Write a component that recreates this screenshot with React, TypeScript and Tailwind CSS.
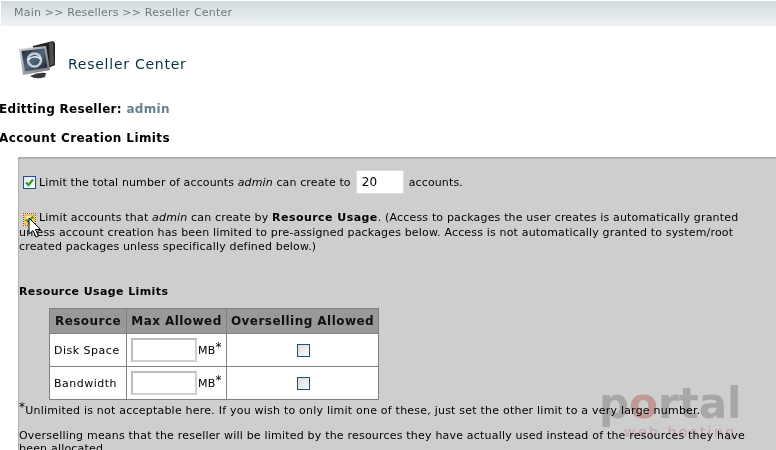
const font = { fontFamily: '"DejaVu Sans", Verdana, sans-serif' }

function Check({ focus }: { focus?: boolean }) {
  return (
    <span className={focus
      ? 'inline-flex w-[13px] h-[13px] shrink-0 items-center justify-center border border-dotted border-[#6b5a3a] bg-[#fde6b4] shadow-[inset_0_0_0_2px_#f6bb52]'
      : 'inline-flex w-[13px] h-[13px] shrink-0 items-center justify-center border border-[#1c5180] bg-gradient-to-br from-[#e6e6e0] to-white'}>
      <svg viewBox="0 0 9 9" className="w-[9px] h-[9px]">
        <path d="M1 4.5 L3.5 7 L8 1.5" fill="none" stroke="#1fa52a" strokeWidth="2.2" />
      </svg>
    </span>
  )
}

function EmptyCheck() {
  return <span className="ml-px inline-block w-[13px] h-[13px] border border-[#1c5180] bg-gradient-to-br from-[#dcdcd6] to-[#fbfbf8]" />
}

function LimitRow({ name }: { name: string }) {
  return (
    <tr className="h-[33px]">
      <td className="border border-[#808080] pl-[4px] pr-[4px] tracking-[0.5px]">{name}</td>
      <td className="border border-[#808080] pl-[4px]">
        <div className="flex items-center">
          <span className="w-[66px] h-[24px] bg-white border-2 border-[#cfcfcf] border-t-[#bdbdbd] border-l-[#bdbdbd]" />
          <span className="ml-px">MB<sup className="text-[12px] relative -top-[3px] align-baseline">*</sup></span>
        </div>
      </td>
      <td className="border border-[#808080] text-center"><div className="flex justify-center"><EmptyCheck /></div></td>
    </tr>
  )
}

export default function App() {
  return (
    <div style={font} className="relative w-[776px] h-[450px] overflow-hidden bg-white text-[11px] text-black">
      <div className="ml-px mt-px h-[25px] flex items-center pl-[13px] text-[11px] tracking-[0.2px] text-[#6f7a7d] bg-gradient-to-b from-[#cfdcdf] to-[#eff3f3]">
        Main &gt;&gt; Resellers &gt;&gt; Reseller Center
      </div>

      <div className="flex items-center ml-[18px] mt-[14px] h-[40px]">
        <svg viewBox="0 0 38 40" className="w-[38px] h-[40px]">
          <defs>
            <linearGradient id="screen" x1="0" y1="0" x2="1" y2="1">
              <stop offset="0" stopColor="#1d2530" />
              <stop offset="0.5" stopColor="#51677f" />
              <stop offset="1" stopColor="#141a22" />
            </linearGradient>
            <linearGradient id="frame" x1="0" y1="0" x2="1" y2="1">
              <stop offset="0" stopColor="#d6dadc" />
              <stop offset="1" stopColor="#6e7276" />
            </linearGradient>
          </defs>
          <path d="M15 6 L35 1 L37 3 L37 25 L26 30 L15 12 Z" fill="#202226" />
          <path d="M31 3 L35 2 L36 24 L32 26 Z" fill="#4c4f53" />
          <path d="M1 9 L28 6 L32 30 L5 35 Z" fill="url(#frame)" />
          <path d="M3.5 11 L26.5 8.5 L29.5 27.5 L7 31.5 Z" fill="url(#screen)" />
          <circle cx="16.5" cy="20" r="6.5" fill="none" stroke="#c3ced6" strokeWidth="2.5" />
          <path d="M10 20 Q16 14 23 19" fill="none" stroke="#f0f4f7" strokeWidth="1.5" />
          <path d="M12 36 Q20 32 28 33 L27 37 Q18 40 12 36 Z" fill="#34373b" />
        </svg>
        <span className="ml-[12px] mt-[8px] text-[14px] text-[#06333e] tracking-[0.75px]">Reseller Center</span>
      </div>

      <div className="-ml-[1px] mt-[22px] text-[12px] font-bold leading-[15px] tracking-[0.3px]">
        Editting Reseller: <span className="text-[#66808f]">admin</span>
      </div>
      <div className="-ml-[1px] mt-[14px] text-[12px] font-bold leading-[15px] tracking-[0.4px]">
        Account Creation Limits
      </div>

      <div className="ml-[18px] mt-[11px] h-[300px] bg-[#cecece] border-t-2 border-l border-[#b0b0b0] leading-[13px] tracking-[0.2px]">
        <div className="flex items-center mt-[11px] ml-[4px] h-[24px] tracking-[0.12px]">
          <Check />
          <span className="ml-[3px]">Limit the total number of accounts <i>admin</i> can create to</span>
          <span className="ml-[5px] w-[48px] h-[24px] bg-white flex items-center pl-[5px] text-[12px] border border-[#dedede]">20</span>
          <span className="ml-[5px]">accounts.</span>
        </div>

        <div className="mt-[17px] w-[735px] leading-[14px] tracking-[0.17px]">
          <span className="inline-flex align-[-3px] ml-[4px] mr-[3px]"><Check focus /></span>
          Limit accounts that <i>admin</i> can create by <b className="tracking-[0.45px]">Resource Usage</b>. (Access to packages the user creates is automatically granted unless account creation has been limited to pre-assigned packages below. Access is not automatically granted to system/root created packages unless specifically defined below.)
        </div>

        <div className="mt-[31px] font-bold leading-[14px] tracking-[0.4px]">Resource Usage Limits</div>

        <table className="ml-[30px] mt-[9px] border-collapse">
          <thead>
            <tr className="h-[25px] bg-[#999999] font-bold text-[12px] tracking-[0.45px] text-[#111]">
              <th className="border border-[#808080] w-[77px] text-center">Resource</th>
              <th className="border border-[#808080] w-[100px] text-center">Max Allowed</th>
              <th className="border border-[#808080] w-[152px] text-center">Overselling Allowed</th>
            </tr>
          </thead>
          <tbody className="bg-white">
            <LimitRow name="Disk Space" />
            <LimitRow name="Bandwidth" />
          </tbody>
        </table>

        <div className="mt-[4px] leading-[14px] whitespace-nowrap tracking-[0.22px]">
          <sup className="text-[12px] align-baseline relative -top-[3px]">*</sup>Unlimited is not acceptable here. If you wish to only limit one of these, just set the other limit to a very large number.
        </div>
        <div className="mt-[11px] w-[750px] leading-[13px]">
          Overselling means that the reseller will be limited by the resources they have actually used instead of the resources they have been allocated.
        </div>
      </div>

      {/* watermark */}
      <div className="absolute left-[599px] top-[379px] pointer-events-none mix-blend-multiply">
        <div className="text-[42px] leading-[50px] font-bold text-[#cfcfcf]">
          p<span className="text-[#eebcbc]">o</span>rtal
        </div>
        <div className="text-[14px] leading-[14px] text-[#f0cccc] tracking-[2.5px] ml-[25px] -mt-[4px]">web hosting</div>
      </div>

      {/* mouse cursor */}
      <svg viewBox="0 0 14 22" className="absolute left-[28px] top-[217px] w-[14px] h-[22px]">
        <path d="M1 1 L1 17 L5 13.5 L8 20 L10.5 19 L7.5 12.5 L12.5 12.5 Z" fill="#fff" stroke="#000" strokeWidth="1" />
      </svg>
    </div>
  )
}
